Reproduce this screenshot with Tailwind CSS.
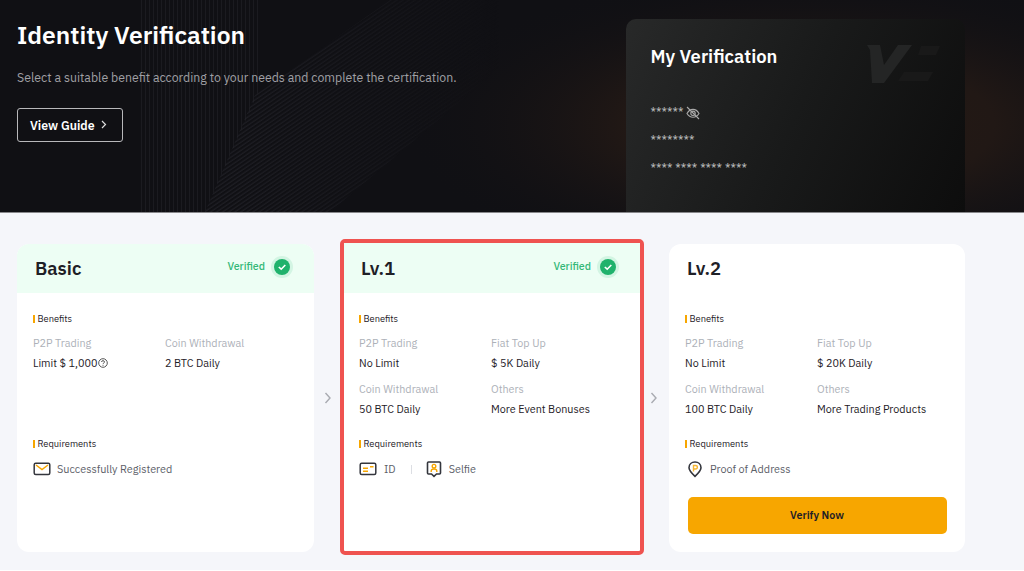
<!DOCTYPE html>
<html lang="en"><head><meta charset="utf-8"><title>Identity Verification</title>
<script src="https://cdn.jsdelivr.net/npm/@tailwindcss/browser@4"></script></head>
<body class="h-[571px] w-[1024px] overflow-hidden border-b border-white bg-[#f5f6fa] font-['IBM_Plex_Sans','Noto_Sans',sans-serif] text-[#1e2026]">
<header class="relative flex h-[213px] overflow-hidden border-b border-[#88888b] bg-[#101014]">
  <svg class="absolute inset-0" width="1024" height="212" viewBox="0 0 1024 212" fill="none">
    <defs>
      <radialGradient id="warm" cx="0" cy="0" r="1" gradientUnits="userSpaceOnUse" gradientTransform="translate(810 125) scale(410 155)"><stop offset="0" stop-color="#261a14"/><stop offset=".45" stop-color="#211815"/><stop offset="1" stop-color="#101014" stop-opacity="0"/></radialGradient>
      <linearGradient id="fade" x1="240" y1="0" x2="500" y2="0" gradientUnits="userSpaceOnUse"><stop stop-color="#292930" stop-opacity=".75"/><stop offset="1" stop-color="#292930" stop-opacity="0"/></linearGradient>
      <pattern id="vert" width="4" height="5" patternUnits="userSpaceOnUse"><path d="M1.5 0V5" stroke="#1b1b20"/></pattern>
      <pattern id="diag" width="5" height="3.4" patternUnits="userSpaceOnUse" patternTransform="rotate(-34)"><path d="M0 1H5" stroke="#fff" stroke-width="1"/></pattern>
      <mask id="m"><path d="M205 212L255 95L390 0H580L330 212Z" fill="url(#diag)"/></mask>
    </defs>
    <path d="M138 0H260V88L205 212H138Z" fill="url(#vert)"/>
    <path d="M200 0H600V212H200Z" fill="url(#fade)" mask="url(#m)"/>
    <path d="M0 0H1024V212H0Z" fill="url(#warm)"/>
  </svg>
  <div class="relative w-[626px] pt-[18px] pl-[17px]">
    <h1 class="text-[24.6px] leading-[34px] font-semibold whitespace-nowrap text-white">Identity Verification</h1>
    <p class="mt-[16px] text-[12.32px] leading-[18px] whitespace-nowrap text-[#a0a0a5]">Select a suitable benefit according to your needs and complete the certification.</p>
    <button class="mt-[22px] flex h-[34px] w-[106px] items-center rounded-[3px] border border-[#b8b8bb] pt-px pl-3 text-[12.3px] font-semibold text-white">View Guide
      <svg class="mb-0.5 ml-1.5" width="6" height="9" viewBox="0 0 6 9" fill="none" stroke="#ddd" stroke-width="1.2"><path d="M1 1L4.5 4.5L1 8"/></svg></button>
  </div>
  <section class="relative mt-[19px] h-[193px] w-[339px] rounded-t-[10px] bg-linear-115 from-[#282929] via-[#191a1a] to-[#0d0d0d] pt-[25px] pl-[24.5px] text-[#b8b8b8]">
    <svg class="absolute top-[26px] right-6" width="74" height="38" viewBox="0 0 74 38" fill="#242525"><path d="M0 0H13L17 20L31 0H45L17 38H5L3 5Z"/><path fill="#191919" d="M54 1H73L69 10H51ZM37 27H66L61 36H31Z"/></svg>
    <h2 class="text-[18.4px] leading-6 font-semibold text-white">My Verification</h2>
    <div class="mt-[35px] flex h-5 items-center gap-[3px]"><span class="pb-[3px] text-[12.2px] leading-4">******</span>
      <svg width="14" height="14" viewBox="0 0 14 14" fill="none" stroke="#aaa" stroke-width="1.1"><path d="M1 7.5C4 2 10 2 13 7.5C10 12.5 4 12.5 1 7.5Z"/><circle cx="7" cy="7.3" r="2.2"/><path d="M1 1L13 13"/></svg></div>
    <p class="mt-[8px] h-5 pt-px text-[12.2px] leading-4">********</p>
    <p class="mt-[8px] h-5 pt-px text-[12.2px] leading-4">**** **** **** ****</p>
  </section>
</header>

<main class="flex pt-[26px] pl-[13px]">
  <article class="m-[5px] mx-1 h-[308px] w-[297px] overflow-hidden rounded-[12px] bg-white">
    <div class="flex h-[49px] items-center bg-[#edfef4] pr-[20px] pl-[18px]">
      <h3 class="grow pt-px text-[18.5px] font-semibold">Basic</h3>
      <span class="mb-[3px] text-[10.6px] font-medium text-[#34b877]">Verified</span>
      <svg class="mb-[3px] ml-[5px]" width="24" height="24" viewBox="0 0 24 24" fill="none"><circle cx="12" cy="12" r="11" fill="#d3f5e3"/><circle cx="12" cy="12" r="8" fill="#20b26c"/><path d="M8.8 12L11.2 14.2L15.3 10" stroke="#fff" stroke-width="1.6"/></svg>
    </div>
    <div class="pl-4">
      <h4 class="mt-[20px] flex h-3 items-center gap-[3px] text-[9.3px]"><i class="h-2 w-[1.5px] bg-[#f7a600]"></i>Benefits</h4>
      <dl class="mt-[10px] grid h-[93px] grid-cols-[132px_1fr] content-start text-[10.8px] leading-[16px]">
        <div><dt class="text-[#adb1b8]">P2P Trading</dt><dd class="mt-1 flex items-center">Limit $ 1,000<svg class="ml-px" width="10" height="10" viewBox="0 0 10 10" fill="none" stroke="#444" stroke-width=".9"><circle cx="5" cy="5" r="4.3"/><path d="M3.5 4C3.5 2.2 6.5 2.2 6.5 4C6.5 5 5 5 5 6.2M5 7V7.8"/></svg></dd></div>
        <div><dt class="text-[#adb1b8]">Coin Withdrawal</dt><dd class="mt-1">2 BTC Daily</dd></div>
      </dl>
      <h4 class="mt-[10px] flex h-3 items-center gap-[3px] text-[9.3px]"><i class="h-2 w-[1.5px] bg-[#f7a600]"></i>Requirements</h4>
      <div class="mt-[9px] flex h-5 items-center text-[10.85px] text-[#5c6068]">
        <svg class="mr-[6px]" width="18" height="16" viewBox="0 0 18 16" fill="none"><rect x="1.2" y="2.2" width="15.6" height="11.2" rx="1.5" stroke="#34363d" stroke-width="1.5"/><path d="M3 4L9 8.5L15 4" stroke="#f7a600" stroke-width="1.5"/></svg>Successfully Registered</div>
    </div>
  </article>
  <div class="flex w-[22px] items-center justify-center"><svg class="mr-0.5" width="8" height="12" viewBox="0 0 8 12" fill="none" stroke="#a9abb1" stroke-width="1.4"><path d="M1.5 1L6 6L1.5 11"/></svg></div>

  <article class="h-[316px] w-[304px] rounded-[5px] border-4 border-[#ef5350] bg-white">
    <div class="flex h-[50px] items-center bg-[#edfef4] pt-px pr-[20px] pl-[17px]">
      <h3 class="grow pt-px text-[18.5px] font-semibold">Lv.1</h3>
      <span class="mb-[3px] text-[10.6px] font-medium text-[#34b877]">Verified</span>
      <svg class="mb-[3px] ml-[5px]" width="24" height="24" viewBox="0 0 24 24" fill="none"><circle cx="12" cy="12" r="11" fill="#d3f5e3"/><circle cx="12" cy="12" r="8" fill="#20b26c"/><path d="M8.8 12L11.2 14.2L15.3 10" stroke="#fff" stroke-width="1.6"/></svg>
    </div>
    <div class="pl-[15px]">
      <h4 class="mt-[20px] flex h-3 items-center gap-[3px] text-[9.3px]"><i class="h-2 w-[1.5px] bg-[#f7a600]"></i>Benefits</h4>
      <dl class="mt-[10px] grid h-[93px] grid-cols-[132px_1fr] content-start gap-y-[10px] text-[10.8px] leading-[16px]">
        <div><dt class="text-[#adb1b8]">P2P Trading</dt><dd class="mt-1">No Limit</dd></div>
        <div><dt class="text-[#adb1b8]">Fiat Top Up</dt><dd class="mt-1">$ 5K Daily</dd></div>
        <div><dt class="text-[#adb1b8]">Coin Withdrawal</dt><dd class="mt-1">50 BTC Daily</dd></div>
        <div><dt class="text-[#adb1b8]">Others</dt><dd class="mt-1">More Event Bonuses</dd></div>
      </dl>
      <h4 class="mt-[10px] flex h-3 items-center gap-[3px] text-[9.3px]"><i class="h-2 w-[1.5px] bg-[#f7a600]"></i>Requirements</h4>
      <div class="mt-[9px] flex h-5 items-center text-[10.85px] text-[#5c6068]">
        <svg class="mr-[7px]" width="18" height="16" viewBox="0 0 18 16" fill="none"><rect x="1.2" y="2.2" width="15.6" height="11.2" rx="1.5" stroke="#34363d" stroke-width="1.5"/><path d="M4 7.3H9M4 10.3H9M11 5.8H14.5" stroke="#f7a600" stroke-width="1.4"/></svg>ID
        <i class="mr-[14px] ml-[15px] h-[9px] w-px bg-[#dcdee3]"></i>
        <svg class="mr-[7px]" width="16" height="18" viewBox="0 0 16 18" fill="none"><path d="M2.5 2H13.5Q14.5 2 14.5 3V13Q14.5 14 13.5 14H10.5L8 16.3L5.5 14H2.5Q1.5 14 1.5 13V3Q1.5 2 2.5 2Z" stroke="#34363d" stroke-width="1.6"/><circle cx="8" cy="6.2" r="1.8" stroke="#f7a600" stroke-width="1.4"/><path d="M5.2 12V11C5.2 8.3 10.8 8.3 10.8 11V12" stroke="#f7a600" stroke-width="1.4"/></svg>Selfie</div>
    </div>
  </article>
  <div class="flex w-[17px] items-center justify-center"><svg class="ml-0.5" width="8" height="12" viewBox="0 0 8 12" fill="none" stroke="#a9abb1" stroke-width="1.4"><path d="M1.5 1L6 6L1.5 11"/></svg></div>

  <article class="m-[5px] ml-[8px] h-[308px] w-[296px] overflow-hidden rounded-[12px] bg-white">
    <div class="flex h-[49px] items-center pl-[18px]"><h3 class="pt-px text-[18.5px] font-semibold">Lv.2</h3></div>
    <div class="pl-4">
      <h4 class="mt-[20px] flex h-3 items-center gap-[3px] text-[9.3px]"><i class="h-2 w-[1.5px] bg-[#f7a600]"></i>Benefits</h4>
      <dl class="mt-[10px] grid h-[93px] grid-cols-[132px_1fr] content-start gap-y-[10px] text-[10.8px] leading-[16px]">
        <div><dt class="text-[#adb1b8]">P2P Trading</dt><dd class="mt-1">No Limit</dd></div>
        <div><dt class="text-[#adb1b8]">Fiat Top Up</dt><dd class="mt-1">$ 20K Daily</dd></div>
        <div><dt class="text-[#adb1b8]">Coin Withdrawal</dt><dd class="mt-1">100 BTC Daily</dd></div>
        <div><dt class="text-[#adb1b8]">Others</dt><dd class="mt-1">More Trading Products</dd></div>
      </dl>
      <h4 class="mt-[10px] flex h-3 items-center gap-[3px] text-[9.3px]"><i class="h-2 w-[1.5px] bg-[#f7a600]"></i>Requirements</h4>
      <div class="mt-[9px] flex h-5 items-center text-[10.85px] text-[#5c6068]">
        <svg class="mr-[7px] ml-[2px]" width="16" height="18" viewBox="0 0 16 18" fill="none"><path d="M8 16.3C5 13.5 2 10.7 2 7.7C2 4.2 4.7 2 8 2S14 4.2 14 7.7C14 10.7 11 13.5 8 16.3Z" stroke="#34363d" stroke-width="1.6"/><path d="M6.5 11.5V5.5H8.5C11 5.5 11 9 8.5 9H6.5" stroke="#f7b733" stroke-width="1.4"/></svg>Proof of Address</div>
      <button class="mt-[18px] ml-[2.5px] h-[37px] w-[259px] rounded-[5px] bg-[#f7a600] text-[10.7px] font-semibold">Verify Now</button>
    </div>
  </article>
</main>
</body></html>
